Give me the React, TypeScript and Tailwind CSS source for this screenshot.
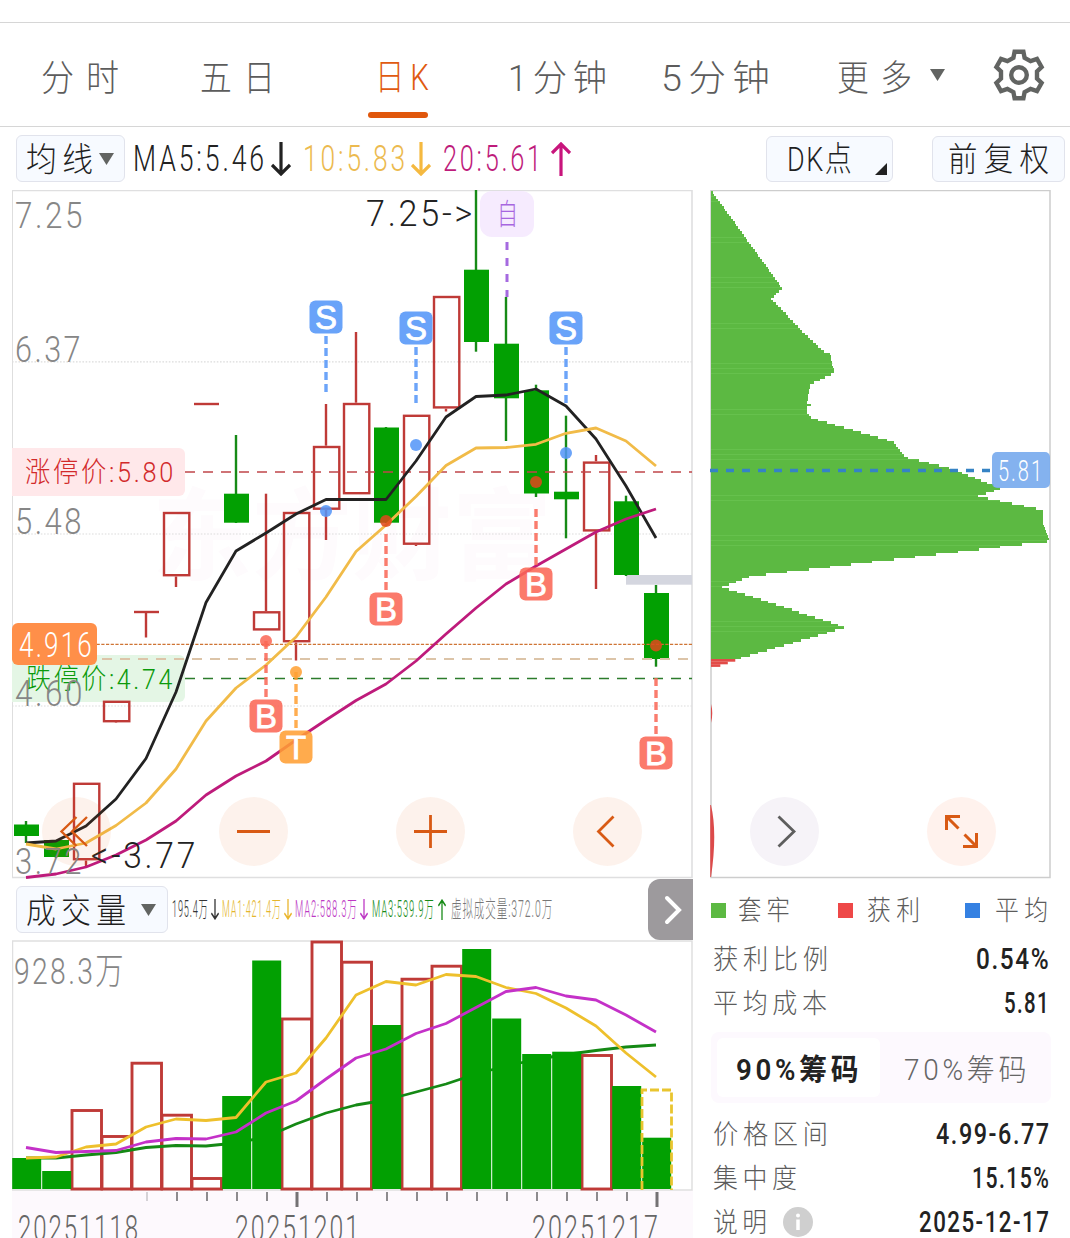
import { useLayoutEffect, useRef, type ReactNode } from "react";

/** Condenses one line of text so that it fills the width its class gives. */
function Fit({ className = "", children }: { className?: string; children: ReactNode }) {
  const box = useRef<HTMLSpanElement>(null);
  const inner = useRef<HTMLSpanElement>(null);
  useLayoutEffect(() => {
    const b = box.current;
    const i = inner.current;
    if (!b || !i) return;
    const spacing = parseFloat(getComputedStyle(i).letterSpacing) || 0;
    i.style.transform = `scaleX(${b.clientWidth / (i.offsetWidth - spacing)})`;
  }, []);
  return (
    <span ref={box} className={`inline-flex shrink-0 items-center whitespace-nowrap leading-none ${className}`}>
      <span ref={inner} className="block shrink-0 origin-left">{children}</span>
    </span>
  );
}

const step = (i: number) => 26 + 30 * i;
const linePoints = (ys: number[]) => ys.map((y, i) => `${step(i)},${y}`).join(" ");

const MA5 = [843, 841, 826, 799, 758.5, 692, 602.5, 551, 533, 514, 499.5, 499.5, 499.5, 461, 417, 396.5, 395, 389, 406, 439, 486, 538];
const MA10 = [844, 849, 843, 825.5, 803, 769, 721, 688, 665, 637, 597, 551.5, 525, 496.5, 465.5, 448, 447.5, 444.3, 433.3, 428, 441, 466];
const MA20 = [877.5, 874, 867, 855, 840, 821, 795, 776, 761, 740, 720, 700.5, 684, 661, 634, 608, 584, 566, 549, 532, 519, 509];

type Candle = { up: boolean; hi: number; top: number; bot: number; lo: number };
const candles: Candle[] = [
  { up: false, hi: 821, top: 824.5, bot: 836, lo: 843 },
  { up: false, hi: 840, top: 840, bot: 857, lo: 858 },
  { up: true, hi: 783, top: 782.5, bot: 860.5, lo: 866 },
  { up: true, hi: 701, top: 700.5, bot: 722.5, lo: 723 },
  { up: true, hi: 612, top: 611, bot: 613, lo: 637.5 },
  { up: true, hi: 512, top: 511.7, bot: 576.5, lo: 587 },
  { up: true, hi: 404, top: 403, bot: 405, lo: 405 },
  { up: false, hi: 435, top: 493.7, bot: 522.7, lo: 523 },
  { up: true, hi: 493.7, top: 611, bot: 630.7, lo: 630.7 },
  { up: true, hi: 512, top: 511.7, bot: 642.5, lo: 660.5 },
  { up: true, hi: 404, top: 445.7, bot: 510, lo: 540 },
  { up: true, hi: 332, top: 402.7, bot: 494.5, lo: 494.5 },
  { up: false, hi: 427, top: 427.5, bot: 522.7, lo: 523 },
  { up: true, hi: 415, top: 414.5, bot: 545, lo: 546 },
  { up: true, hi: 296, top: 295.7, bot: 408.7, lo: 411.5 },
  { up: false, hi: 190, top: 269.7, bot: 342, lo: 351.7 },
  { up: false, hi: 297, top: 343.7, bot: 398.3, lo: 441 },
  { up: false, hi: 384.7, top: 390.3, bot: 493.5, lo: 497 },
  { up: false, hi: 415.7, top: 491.7, bot: 499.3, lo: 538.3 },
  { up: true, hi: 455, top: 461.3, bot: 531.7, lo: 589 },
  { up: false, hi: 495.7, top: 501.3, bot: 575, lo: 576 },
  { up: false, hi: 585, top: 593, bot: 659, lo: 666.7 },
];

const RED = "#bf3a37";
const GREEN = "#02a002";

function CandleShape({ c, i }: { c: Candle; i: number }) {
  const x = step(i);
  const h = c.bot - c.top;
  if (!c.up)
    return (
      <g fill={GREEN}>
        <rect x={x - 1.2} y={c.hi} width={2.4} height={c.lo - c.hi} fill="#178a17" />
        <rect x={x - 12} y={c.top} width={25} height={h} />
      </g>
    );
  return (
    <g fill="none" stroke={RED} strokeWidth={2.4}>
      {c.top > c.hi + 1 && <path d={`M${x} ${c.hi}V${c.top}`} />}
      {c.lo > c.bot && <path d={`M${x} ${c.bot}V${c.lo}`} />}
      {h > 4 ? (
        <rect x={x - 12} y={c.top + 1.3} width={25.3} height={h - 2.6} />
      ) : (
        <path d={`M${x - 12} ${c.top + 1}H${x + 13}`} />
      )}
    </g>
  );
}

type SignalProps = { kind: "S" | "B" | "T"; x: number; y: number; from: number; to: number; dot: number };
const signals: SignalProps[] = [
  { kind: "S", x: 326, y: 317, from: 336, to: 392, dot: 511 },
  { kind: "S", x: 416, y: 328, from: 347, to: 403, dot: 445 },
  { kind: "S", x: 566, y: 328, from: 347, to: 403, dot: 453 },
  { kind: "B", x: 266, y: 716, from: 641, to: 697, dot: 641 },
  { kind: "B", x: 386, y: 609, from: 534, to: 590, dot: 521 },
  { kind: "B", x: 536, y: 584, from: 509, to: 565, dot: 482 },
  { kind: "B", x: 656, y: 753, from: 678, to: 735, dot: 645.5 },
  { kind: "T", x: 296, y: 747, from: 672, to: 728, dot: 672 },
];
const signalColor = { S: "#5395f8", B: "#fa6655", T: "#ff9f32" };

function Signal({ kind, x, y, from, to, dot }: SignalProps) {
  const c = signalColor[kind];
  const onBody = kind === "B" && dot < 660 && dot !== 641;
  return (
    <g>
      <path d={`M${x} ${from}V${to}`} stroke={c} strokeWidth={3.4} strokeDasharray="8 4" opacity={0.85} />
      <circle cx={x} cy={dot} r={6} fill={onBody ? "#e0481c" : c} opacity={0.86} />
      <rect x={x - 16.5} y={y - 16.5} width={33} height={33} rx={6} fill={c} opacity={0.87} />
      <text x={x} y={y + 11.8} textAnchor="middle" fill="#fff" stroke="#fff" strokeWidth={0.8} fontSize={33} fontFamily="Liberation Sans, sans-serif">
        {kind}
      </text>
    </g>
  );
}

function Label({ x, y, w, size, fill, gap = 3, children }: { x: number; y: number; w: number; size: number; fill: string; gap?: number; children: string }) {
  return (
    <text x={x} y={y} textLength={w + gap} lengthAdjust="spacingAndGlyphs" letterSpacing={gap} fontSize={size} fill={fill}>
      {children}
    </text>
  );
}

function PriceChart() {
  return (
    <svg className="block" width="681" height="689" viewBox="12 190 681 689">
      <g className="font-bold" fill="#fefbfd" fontSize="100">
        <text x="152" y="572">东方财富</text>
      </g>
      <g stroke="#dcdcdc" strokeWidth="1.2" strokeDasharray="1.6 1.6">
        <path d="M12 361.8H692M12 534H692M12 706H692" />
      </g>
      <path d="M12.5 190V878" stroke="#dedede" />
      <path d="M12 190.5H692V877.5H12" fill="none" stroke="#dfdfe0" strokeWidth="1.6" />
      <rect x="626" y="575" width="66" height="9.7" fill="#d4d6df" />
      <path d="M12 448H179a6 6 0 0 1 6 6V490a6 6 0 0 1-6 6H12Z" fill="#ffe8ea" />
      <path d="M12 655H179a6 6 0 0 1 6 6V696a6 6 0 0 1-6 6H12Z" fill="#e4f6e5" />
      {candles.map((c, i) => (
        <CandleShape key={i} c={c} i={i} />
      ))}
      <g fill="none" strokeWidth="1.3">
        <path d="M185 472H692" stroke="#c0464a" strokeDasharray="10 8" />
        <path d="M12 644.3H692" stroke="#cf7434" strokeDasharray="3.2 1.5" />
        <path d="M12 659H692" stroke="#dcc4a8" strokeWidth="1.8" strokeDasharray="10 8" />
        <path d="M185 678.5H692" stroke="#2c7c2c" strokeDasharray="10 8" />
      </g>
      <g fill="none" strokeWidth="2.8" strokeLinejoin="round">
        <polyline points={linePoints(MA5)} stroke="#222" />
        <polyline points={linePoints(MA10)} stroke="#f1bb48" />
        <polyline points={linePoints(MA20)} stroke="#be1b7b" />
      </g>
      {signals.map((s, i) => (
        <Signal key={i} {...s} />
      ))}
      <rect x="480" y="191" width="54" height="46" rx="12" fill="#f6ebfe" />
      <path d="M507 242V297" stroke="#a56ae0" strokeWidth="3" strokeDasharray="8 8" />
      <g className="font-light">
        <text x="497" y="225" fontSize="29" fill="#a866e0" textLength="21" lengthAdjust="spacingAndGlyphs">自</text>
        <Label x={15} y={228} w={67} size={37} fill="#868686">7.25</Label>
        <Label x={15} y={362} w={65} size={37} fill="#868686">6.37</Label>
        <Label x={15} y={534} w={66} size={37} fill="#868686">5.48</Label>
        <Label x={15} y={874} w={66} size={37} fill="#868686">3.72</Label>
        <Label x={366} y={226} w={106} size={37} fill="#222">{"7.25->"}</Label>
        <Label x={91} y={868} w={104} size={37} fill="#222">{"<-3.77"}</Label>
        <Label x={25} y={482} w={148} size={28} fill="#d22a2a">涨停价:5.80</Label>
        <Label x={26} y={689} w={146} size={28} fill="#0b9a0b">跌停价:4.74</Label>
        <Label x={15} y={706} w={67} size={37} fill="#868686">4.60</Label>
        <rect x="12" y="623" width="85" height="42" rx="6" fill="#ff8f49" />
        <Label x={19} y={657} w={72} size={35} fill="#fff">4.916</Label>
      </g>
      <g fill="#e8580f" fillOpacity="0.08">
        <circle cx="76.5" cy="831.5" r="34.5" />
        <circle cx="253.5" cy="831.5" r="34.5" />
        <circle cx="430.5" cy="831.5" r="34.5" />
        <circle cx="607.5" cy="831.5" r="34.5" />
      </g>
      <g fill="none" stroke="#d85a14" strokeWidth="2.8">
        <path d="M76.5 817L61.5 831.5L76.5 846M87 817L72 831.5L87 846" strokeWidth="2.4" />
        <path d="M237 831.5H270M414 831.5H447M430.5 815V848M613.5 816.5L598.5 831.5L613.5 846.5" />
      </g>
    </svg>
  );
}

const profile: [number, number][] = [
  [190, 0], [288, 71], [298.5, 60], [334, 94], [353, 114], [354, 119], [372.5, 123.5], [384, 99], [403, 96], [404, 100],
  [406.5, 100], [407, 95.5], [413, 96], [418, 101], [442, 182], [457, 194], [468, 238], [488.5, 290], [496, 266],
  [510, 332], [525, 332], [541, 339.5], [543, 318], [576, 40], [587, 11], [627, 134], [659, 26],
];
const red: [number, number][] = [[659, 26], [667, 3]];
const at = (pts: [number, number][], y: number) => {
  for (let k = 1; k < pts.length; k++) {
    const [y0, w0] = pts[k - 1];
    const [y1, w1] = pts[k];
    if (y <= y1) return w0 + ((w1 - w0) * (y - y0)) / (y1 - y0);
  }
  return pts[pts.length - 1][1];
};
const ROW = 2.53;
const rows = Array.from({ length: 185 }, (_, k) => 191 + k * ROW);

function ChipChart() {
  return (
    <svg className="block" width="342" height="689" viewBox="710 190 342 689">
      <path d="M711 190.5H1050V877.5H711Z" fill="none" stroke="#cdcdcd" strokeWidth="1.5" />
      {rows.map((y, k) => (
        <rect key={k} x={711} y={y} width={at(profile, y + 1.2)} height={ROW + 0.3} fill="#5cb942" shapeRendering="crispEdges" />
      ))}
      {rows.filter((_, k) => k % 17 < 5 && k % 2 === 0).map((y, k) => (
        <rect key={k} x={711} y={Math.round(y)} width={at(profile, y + 1.2)} height={1} fill="#74cc5c" fillOpacity="0.45" />
      ))}
      {[659, 661.6, 664.2].map((y) => (
        <rect key={y} x={711} y={y} width={at(red, y + 0.6)} height={2.7} fill="#e24b47" />
      ))}
      <path d="M711 704Q713.5 713 711 723ZM711 805Q717.5 833 711 877Z" fill="#dc4a4a" />
      <path d="M710.5 805V877" stroke="#dc6a6a" />
      <path d="M710 470.5H990" stroke="#3583c4" strokeWidth="3.3" strokeDasharray="8 8" />
      <rect x="992" y="452" width="58" height="36" rx="5" fill="#79abee" fillOpacity="0.92" />
      <g className="font-light">
        <Label x={998} y={481} w={43} size={30} fill="#fff">5.81</Label>
      </g>
      <circle cx="784.5" cy="831.5" r="34.5" fill="#f6f3f8" />
      <circle cx="961.5" cy="831.5" r="34.5" fill="#fff2ed" />
      <path d="M778.5 816.5L794 831.5L778.5 846.5" fill="none" stroke="#5e5e5e" strokeWidth="2.8" />
      <path d="M946.5 830V816.5H960M947 817L958.5 828.5M976.5 833V846.5H963M976 846L964.5 834.5" fill="none" stroke="#d85a14" strokeWidth="3" />
    </svg>
  );
}

const volumes: [number, boolean][] = [
  [1158, false], [1171, false], [1109, true], [1135, true], [1061.7, true], [1113.7, true], [1177, true], [1096, false],
  [960.5, false], [1017.5, true], [940.5, true], [960.7, true], [1025, false], [977.7, true], [964.7, true], [949, false],
  [1018.5, false], [1054, false], [1051.7, false], [1054, true], [1086, false], [1137.7, false],
];
const V1 = [1158, 1157, 1147, 1144, 1127, 1119, 1120.5, 1117.5, 1082, 1073, 1038, 995, 981.5, 985, 974.5, 976.5, 987.5, 993.5, 1008, 1026, 1053, 1077];
const V2 = [1147.5, 1152.5, 1151.5, 1150.5, 1142, 1138.5, 1139, 1132, 1113, 1101, 1079, 1058, 1049, 1033.5, 1023.5, 1007.5, 991.5, 987.5, 996, 1000, 1015, 1032];
const V3 = [1158, 1158, 1155, 1152.5, 1147.5, 1145.5, 1146, 1143, 1137, 1124, 1113, 1105, 1100, 1092, 1084, 1074, 1066, 1059.5, 1054.5, 1050.5, 1047, 1045];

function VolumeChart() {
  return (
    <svg className="block" width="681" height="298" viewBox="12 940 681 298">
      <rect x="12" y="1190" width="681" height="48" fill="#fdf9fd" />
      <path d="M12.5 941H692V1190H12.5Z" fill="none" stroke="#dfdfe0" strokeWidth="1.5" />
      <g className="font-light">
        <Label x={14} y={984} w={109} size={36} fill="#868686">928.3万</Label>
      </g>
      {volumes.map(([top, up], i) =>
        up ? <rect key={i} x={step(i) - 14} y={top + 1.5} width={29.5} height={1187.5 - top} fill="none" stroke={RED} strokeWidth="2.9" /> : null,
      )}
      <polyline points={linePoints(V3)} fill="none" stroke="#158915" strokeWidth="2.8" strokeLinejoin="round" />
      {volumes.map(([top, up], i) =>
        up ? null : <rect key={i} x={step(i) - 13.8} y={top} width={29} height={1189 - top} fill={GREEN} />,
      )}
      <path d="M642 1190V1090H671.5V1190" fill="none" stroke="#e9c52f" strokeWidth="2.8" strokeDasharray="9 3" />
      <g fill="none" strokeWidth="2.8" strokeLinejoin="round">
        <polyline points={linePoints(V1)} stroke="#eec02c" />
        <polyline points={linePoints(V2)} stroke="#c431c8" />
      </g>
      {Array.from({ length: 18 }, (_, k) => {
        const major = k === 5 || k === 17;
        return (
          <rect key={k} x={146 + 30 * k - (major ? 0.5 : 0)} y={1192} width={major ? 3 : 2} height={major ? 15 : 9} fill={k === 0 ? "#d5d2d6" : major ? "#747274" : "#8d8b8e"} />
        );
      })}
      <g className="font-light">
        <Label x={18} y={1241} w={119} size={37} fill="#666">20251118</Label>
        <Label x={235} y={1241} w={123} size={37} fill="#666">20251201</Label>
        <Label x={532} y={1241} w={125} size={37} fill="#666">20251217</Label>
      </g>
    </svg>
  );
}

function Arrow({ up = false, className }: { up?: boolean; className: string }) {
  return (
    <svg className={`shrink-0 ${className}`} viewBox="0 0 20 34" preserveAspectRatio="none" fill="none" stroke="currentColor" strokeWidth="3.2">
      <path d={up ? "M10 34V2M1 11L10 2L19 11" : "M10 0V32M1 23L10 32L19 23"} />
    </svg>
  );
}

function Caret({ className }: { className: string }) {
  return (
    <svg className={`shrink-0 ${className}`} viewBox="0 0 14 12" preserveAspectRatio="none" fill="#626462">
      <path d="M0 0H14L7 12Z" />
    </svg>
  );
}

function Gear() {
  return (
    <svg className="h-[54px] w-[54px] shrink-0" viewBox="-27 -27 54 54" fill="none" stroke="#626462" strokeWidth="4.4">
      <path d="M-4.4 -23.300H4.400L5.600 -17.200L11.600 -13.800L18 -16L22.600 -8L18 -3.600V3.600L22.600 8L18 16L11.600 13.800L5.600 17.200L4.400 23.300H-4.400L-5.600 17.200L-11.600 13.800L-18 16L-22.600 8L-18 3.600V-3.600L-22.600 -8L-18 -16L-11.600 -13.800L-5.600 -17.200Z" />
      <circle r="7.800" />
    </svg>
  );
}

const boxButton = "flex shrink-0 items-center rounded-md border-[1.5px] border-[#e1e3ec] bg-[#f7faff] text-[#1f1f1f]";

function Stat({ name, nameClass, value, valueClass, info = false }: { name: string; nameClass: string; value: string; valueClass: string; info?: boolean }) {
  return (
    <div className="flex h-11 items-center justify-between pl-[3px] pr-[3px]">
      <div className="flex items-center gap-4">
        <Fit className={`pt-0.5 text-[27px] tracking-[5px] text-[#5c5c5c] ${nameClass}`}>{name}</Fit>
        {info && (
          <svg className="h-[30px] w-[30px]" viewBox="0 0 30 30">
            <circle cx="15" cy="15" r="15" fill="#cfcfcf" />
            <circle cx="15" cy="8.5" r="2" fill="#fff" />
            <path d="M15 12.5V23" stroke="#fff" strokeWidth="3.5" />
          </svg>
        )}
      </div>
      <Fit className={`text-[30px] font-medium tracking-[2px] text-[#222] ${valueClass}`}>{value}</Fit>
    </div>
  );
}

export default function App() {
  return (
    <div className="h-[1238px] w-[1070px] overflow-hidden bg-white font-['Roboto','Noto_Sans_CJK_SC',sans-serif] font-light">
      <div className="h-[23px] border-b border-[#d6d6d6]" />
      <nav className="flex h-[104px] items-center border-b border-[#d6d6d6] pl-[41px] text-[36px] text-[#5c5c5c]">
        <Fit className="w-[78px] pt-2 tracking-[13px]">分时</Fit>
        <Fit className="ml-[81px] w-[75px] pt-2 tracking-[13px]">五日</Fit>
        <div className="ml-[93px] flex h-full w-[60px] flex-col items-center justify-between pb-2 text-[#e05a10]">
          <Fit className="ml-2 mt-[37px] w-[54px] tracking-[7px]">日K</Fit>
          <span className="h-1.5 w-[60px] rounded-full bg-[#e0570c]" />
        </div>
        <Fit className="ml-[80px] w-[99px] pt-2 tracking-[6px]">1分钟</Fit>
        <Fit className="ml-[54px] w-[109px] pt-2 tracking-[6px]">5分钟</Fit>
        <Fit className="ml-[67px] w-[75px] pt-2 tracking-[13px]">更多</Fit>
        <Caret className="ml-[18px] h-3 w-[15px]" />
        <div className="ml-[47px]">
          <Gear />
        </div>
      </nav>

      <div className="flex h-[63px] items-center pl-4 text-[37px]">
        <button className={`${boxButton} h-[47px] w-[109px] gap-1.5 pl-[9px]`}>
          <Fit className="w-[67px] pt-0.5 text-[33px] tracking-[6px]">均线</Fit>
          <Caret className="h-3 w-[15px]" />
        </button>
        <Fit className="ml-2 w-[131px] tracking-[4px] text-[#222]">MA5:5.46</Fit>
        <Arrow className="ml-[7px] h-[34px] w-5 text-[#222]" />
        <Fit className="ml-3 w-[102px] tracking-[4px] text-[#ecba4f]">10:5.83</Fit>
        <Arrow className="ml-[6px] h-[34px] w-5 text-[#f5b940]" />
        <Fit className="ml-3 w-[98px] tracking-[4px] text-[#be1b7b]">20:5.61</Fit>
        <Arrow up className="ml-[10px] h-[34px] w-5 text-[#c8157c]" />
        <button className={`${boxButton} ml-[195px] h-[46px] w-[127px] justify-between pl-5 pr-[5px]`}>
          <Fit className="w-[65px] text-[34px] tracking-[2px]">DK点</Fit>
          <svg className="mt-5 h-3 w-3" viewBox="0 0 12 12" fill="#222"><path d="M12 0V12H0Z" /></svg>
        </button>
        <button className={`${boxButton} ml-[39px] h-[46px] w-[133px] pl-[15px]`}>
          <Fit className="w-[101px] pt-0.5 text-[33px] tracking-[7px]">前复权</Fit>
        </button>
      </div>

      <main className="flex pl-3">
        <section className="w-[681px]">
          <PriceChart />
          <div className="flex h-[61px] items-center pl-1 text-[23px]">
            <button className={`${boxButton} h-[47px] w-[152px] gap-[15px] pl-[9px]`}>
              <Fit className="w-[100px] pt-0.5 text-[34px] tracking-[6px]">成交量</Fit>
              <Caret className="h-3 w-[15px]" />
            </button>
            <Fit className="ml-[4px] w-[36px] tracking-[2px] text-[#333]">195.4万</Fit>
            <Arrow className="ml-[3px] h-[21px] w-[8px] text-[#333]" />
            <Fit className="ml-[3px] w-[59px] tracking-[2px] text-[#e4b52c]">MA1:421.4万</Fit>
            <Arrow className="ml-[3px] h-[21px] w-[8px] text-[#eab52c]" />
            <Fit className="ml-[3px] w-[62px] tracking-[2px] text-[#bd38c4]">MA2:588.3万</Fit>
            <Arrow className="ml-[3px] h-[21px] w-[8px] text-[#bd38c4]" />
            <Fit className="ml-[4px] w-[62px] tracking-[2px] text-[#168a16]">MA3:539.9万</Fit>
            <Arrow up className="ml-[4px] h-[21px] w-[8px] text-[#168a16]" />
            <Fit className="ml-[5px] w-[101px] tracking-[2px] text-[#777]">虚拟成交量:372.0万</Fit>
            <button className="ml-auto flex h-[61px] w-[45px] items-center justify-center rounded-l-xl bg-[#9d9a9d]">
              <svg className="ml-1 h-[30px] w-5" viewBox="0 0 20 30" fill="none" stroke="#fff" strokeWidth="4" strokeLinecap="round">
                <path d="M4 3L16 15L4 27" />
              </svg>
            </button>
          </div>
          <VolumeChart />
        </section>

        <aside className="ml-[17px] w-[342px]">
          <ChipChart />
          <div className="flex h-[62px] items-center pl-px text-[27px] text-[#5c5c5c]">
            <span className="h-[15px] w-[15px] bg-[#5cb942]" />
            <Fit className="ml-[12px] w-[52px] pt-0.5 tracking-[6px]">套牢</Fit>
            <span className="ml-[48px] h-[15px] w-[15px] bg-[#ee4848]" />
            <Fit className="ml-[14px] w-[53px] pt-0.5 tracking-[6px]">获利</Fit>
            <span className="ml-[45px] h-[15px] w-[15px] bg-[#3581e2]" />
            <Fit className="ml-[15px] w-[53px] pt-0.5 tracking-[6px]">平均</Fit>
          </div>
          <div className="-mt-1">
            <Stat name="获利比例" nameClass="w-[115px]" value="0.54%" valueClass="w-[73px]" />
            <Stat name="平均成本" nameClass="w-[114px]" value="5.81" valueClass="w-[45px]" />
          </div>
          <div className="ml-px mt-[7px] flex h-[71px] w-[340px] items-center rounded-lg bg-[#fdf9fe] p-1.5">
            <div className="flex h-[59px] w-[163px] items-center justify-center rounded-md bg-white">
              <Fit className="mr-1 w-[122px] pt-1 text-[30px] font-semibold tracking-[4px] text-[#222]">90%筹码</Fit>
            </div>
            <div className="flex h-[59px] w-[165px] items-center justify-center pl-1">
              <Fit className="w-[122px] pt-1 text-[30px] tracking-[4px] text-[#666]">70%筹码</Fit>
            </div>
          </div>
          <div className="mt-[9px]">
            <Stat name="价格区间" nameClass="w-[115px]" value="4.99-6.77" valueClass="w-[113px]" />
            <Stat name="集中度" nameClass="w-[84px]" value="15.15%" valueClass="w-[77px]" />
            <Stat name="说明" nameClass="w-[54px]" value="2025-12-17" valueClass="w-[130px]" info />
          </div>
        </aside>
      </main>
    </div>
  );
}
